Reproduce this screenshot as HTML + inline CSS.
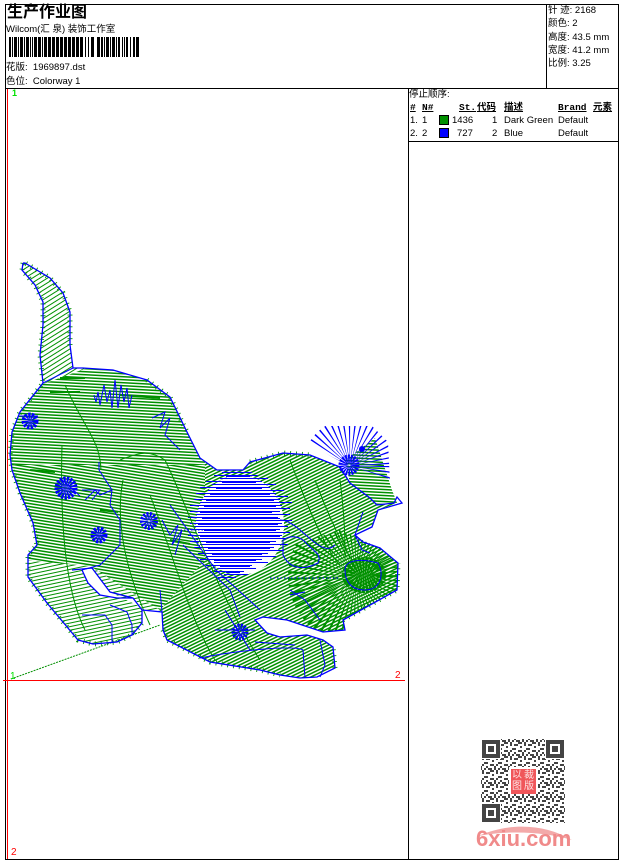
<!DOCTYPE html>
<html><head><meta charset="utf-8"><style>
html,body{margin:0;padding:0;background:#fff}
#p{position:relative;width:620px;height:860px;overflow:hidden;background:#fff;font-family:"Liberation Sans","Noto Sans CJK SC",sans-serif;font-size:9.5px;color:#000}
#p span{position:absolute;white-space:nowrap;line-height:12px}
.m{font-family:"Liberation Mono","Noto Sans CJK SC",monospace;font-weight:bold;font-size:9.5px;text-decoration:underline}
svg{position:absolute;left:0;top:0}
</style></head><body><div id="p">
<svg width="620" height="860" viewBox="0 0 620 860" shape-rendering="crispEdges">
<defs>
<pattern id="h1" width="48" height="6" patternUnits="userSpaceOnUse" patternTransform="rotate(3)"><path d="M0 .8H48M0 3.8H48" stroke="#009000" stroke-width="1.2"/></pattern>
<pattern id="h2" width="48" height="6" patternUnits="userSpaceOnUse" patternTransform="rotate(9)"><path d="M0 .8H48M0 3.8H48" stroke="#009000" stroke-width="1.2"/></pattern>
<pattern id="h3" width="48" height="7" patternUnits="userSpaceOnUse" patternTransform="rotate(-12)"><path d="M0 1H48M0 4.5H48" stroke="#009000" stroke-width="1.4"/></pattern>
<pattern id="h4" width="48" height="6" patternUnits="userSpaceOnUse" patternTransform="rotate(-26)"><path d="M0 .8H48M0 3.8H48" stroke="#009000" stroke-width="1.2"/></pattern>
<pattern id="h5" width="48" height="4" patternUnits="userSpaceOnUse" patternTransform="rotate(-32)"><path d="M0 1H48" stroke="#009000" stroke-width="1.3"/></pattern>
<pattern id="qr" width="14" height="14" patternUnits="userSpaceOnUse"><path d="M0 0h4v2h-4zM6 0h2v4h-2zM10 2h4v2h-4zM2 4h2v2h-2zM8 6h4v2h-4zM0 8h4v2h-4zM6 8h2v2h-2zM4 10h2v4h-2zM10 10h2v2h-2zM12 12h2v2h-2zM0 12h2v2h-2zM8 12h2v2h-2z" fill="#444"/></pattern>
<clipPath id="sil"><path d="M23 263L22 270L35 285L43 302L43 325L40 355L43 383L20 412L12 432L10 455L12 470L20 493L33 523L37 545L28 555L28 577L47 603L78 640L93 644L117 642L132 635L142 623L142 610L162 612L163 630L167 640L210 662L260 670L280 675L300 678L317 677L335 668L333 647L323 640L307 635L280 637L267 633L255 620L263 617L287 620L323 632L345 630L343 620L397 590L398 563L380 548L363 542L355 535L372 527L378 510L397 503L377 505L370 498L350 483L340 467L310 455L283 453L250 462L243 470L217 470L200 458L187 432L170 397L147 380L113 370L83 368L73 368L70 345L70 312L63 293L50 278L25 263Z"/></clipPath>
<clipPath id="gap"><path d="M0 0H620V860H0ZM82 570L88 583L100 595L117 598L133 598L143 608L110 592L92 568Z" clip-rule="evenodd"/></clipPath>
<clipPath id="upper"><path d="M298 438L345 464L390 482L388 442L372 426H318Z"/></clipPath>
<clipPath id="muz"><path d="M250 560L340 530L380 548L398 563L397 590L343 620L345 630L323 632L287 620L285 595Z"/></clipPath>
</defs>

<!-- stitch fills -->
<g clip-path="url(#sil)"><g clip-path="url(#gap)" shape-rendering="auto">
<path d="M0 384L43 384L90 367H205V465H0Z" fill="url(#h1)"/>
<path d="M0 465H205V560L160 610L90 566L20 560Z" fill="url(#h2)"/>
<path d="M10 555L20 560L90 566L160 610V665H20Z" fill="url(#h3)"/>
<path d="M160 610L205 560V440H410V700H160Z" fill="url(#h4)"/>
<path d="M15 255H90V367L43 384Z" fill="url(#h5)"/>
</g></g>
<path d="M345 460L375 438L392 490L397 503L377 505L350 483Z" fill="url(#h1)" shape-rendering="auto"/>
<ellipse cx="240" cy="525" rx="44" ry="50" fill="#fff"/>
<!-- blue patch horizontal stitches -->
<path id="bp" stroke="#0000ff" stroke-width="1" fill="none" d="M222 472.5H252M214 475.5H258M220 478.5H268M206 481.5H262M212 484.5H276M200 487.5H270M208 490.5H284M196 493.5H276M204 496.5H288M194 499.5H280M200 502.5H292M190 505.5H282M198 508.5H290M190 511.5H280M196 514.5H290M188 517.5H278M196 520.5H292M190 523.5H282M194 526.5H288M190 529.5H280M198 532.5H290M188 535.5H282M196 538.5H286M190 541.5H276M200 544.5H288M194 547.5H274M204 550.5H284M198 553.5H268M206 556.5H276M200 559.5H262M214 562.5H268M206 565.5H252M218 568.5H256M214 571.5H244M224 574.5H248M218 577.5H236"/>
<path stroke="#0000ff" stroke-width="1" fill="none" d="M226 476.5H250M222 482.5H256M216 488.5H262M210 494.5H270M206 500.5H274M204 506.5H276M200 512.5H272M202 518.5H280M198 524.5H278M204 530.5H276M200 536.5H280M206 542.5H270M208 548.5H270M212 554.5H262M214 560.5H256M220 566.5H250M226 572.5H240"/>
<g shape-rendering="auto" fill="none">
<!-- green fringe stubs -->
<path d="M23 263L22 270L35 285L43 302L43 325L40 355L43 383L20 412L12 432L10 455L12 470L20 493L33 523L37 545L28 555L28 577L47 603L78 640L93 644L117 642L132 635L142 623M163 630L167 640L210 662L260 670L280 675M335 668L333 647M343 620L397 590L398 563M70 345L70 312L63 293L50 278L25 263M147 380L170 397L187 432M250 462L283 453L310 455" stroke="#009000" stroke-width="5" stroke-dasharray=".9 5"/>
<!-- muzzle radial -->
<g clip-path="url(#muz)"><circle cx="356" cy="576" r="34" stroke="#009000" stroke-width="68" stroke-dasharray="1.2 2.4"/></g>
<ellipse cx="364" cy="575" rx="13" ry="9" stroke="#009000" stroke-width="18" stroke-dasharray="2 .8"/>
<!-- green interior curves -->
<g stroke="#009000" stroke-width="1">
<path d="M65 385C85 430 100 440 101 470M62 445C60 520 65 590 85 630M123 480C115 520 125 570 150 625M150 495C175 560 190 620 215 660M120 460C140 452 150 450 165 460C185 500 215 590 260 660M290 460C305 500 325 550 340 565M315 480C330 520 345 550 352 560M340 480C345 520 345 540 345 560"/>
<path d="M11 679L160 625" stroke-dasharray="2 1"/>
</g>
<g stroke="#009000" stroke-width="2"><path d="M60 378L85 378M120 395L160 398M50 392L80 392M30 470L55 472M100 510L118 512M170 540L190 544"/></g>
<!-- blue outline -->
<path d="M23 263L22 270L35 285L43 302L43 325L40 355L43 383L20 412L12 432L10 455L12 470L20 493L33 523L37 545L28 555L28 577L47 603L78 640L93 644L117 642L132 635L142 623L142 610L133 598L117 598L100 595L88 583L82 570M72 570L92 568L110 592L133 598M142 610L162 612L163 630L167 640L210 662L260 670L280 675L300 678L317 677L335 668L333 647L323 640L307 635L280 637L267 633L255 620L263 617L287 620L323 632L345 630L343 620L397 590L398 563L380 548L363 542L355 535L372 527L378 510L402 503L397 497L394 503L377 505L370 498L350 483L340 467L310 455L283 453L250 462L243 470L217 470L200 458L187 432L170 397L147 380L113 370L83 368L73 368L70 345L70 312L63 293L50 278L25 263L23 263" stroke="#0000ff" stroke-width="1.3"/>
<g stroke="#0000ff" stroke-width="1">
<path d="M43 383L73 368M160 590L162 612M99 462L99 470L112 490L110 505L120 520L120 545L100 565L82 570M112 490L100 495L95 490L85 500M110 605L127 612L132 625V635M82 615L105 615L112 625L112 642"/>
<path d="M170 505L216 570L260 610M183 545L230 590L240 617M280 520C300 520 320 560 335 545M283 540C290 535 300 535 308 545C315 552 322 555 318 563C305 570 290 570 283 555ZM290 590L305 600L320 620M355 535L362 550L370 553M345 570C345 560 360 558 378 563C385 575 380 590 365 590C350 590 345 580 345 570ZM290 595L305 592M355 535L363 512"/>
<path d="M177 530H225M270 578H340" stroke-dasharray="1.5 2"/>
<path d="M200 658C240 650 295 645 303 650L305 678M255 642L295 645M320 640L325 665L320 677"/>
<path d="M94 395L96 402L98 392L100 405L104 385L107 402L110 390L112 408L115 380L118 408L121 385L124 402L127 388L129 408L132 395"/>
<path d="M152 418L165 412L160 428L170 418L165 435L180 450"/>
<path d="M162 520L170 535L178 525L172 545L182 530L175 555"/>
</g>
<g stroke="#0000ff" stroke-width="1">
<circle cx="30" cy="421" r="4" stroke-width="9" stroke-dasharray="1.5 .7"/>
<circle cx="66" cy="488" r="6" stroke-width="11" stroke-dasharray="1.5 .7"/>
<circle cx="99" cy="535" r="4" stroke-width="9" stroke-dasharray="1.5 .7"/>
<circle cx="149" cy="521" r="5" stroke-width="8" stroke-dasharray="1.5 .9"/>
<circle cx="240" cy="632" r="5" stroke-width="7" stroke-dasharray="1.5 .9"/>
</g>
<path d="M20 416H38M60 478L80 496M82 490H100L92 500M225 610L250 650M215 630H255" stroke="#0000ff" stroke-width="1"/>
<!-- ear spikes -->
<g clip-path="url(#upper)"><circle cx="350" cy="466" r="24" stroke="#0000ff" stroke-width="46" stroke-dasharray=".8 2.5"/></g>
<circle cx="349" cy="465" r="6" stroke="#0000ff" stroke-width="9" stroke-dasharray="1.4 .7"/>
<circle cx="362" cy="449" r="3" fill="#0000ff"/>
</g>

<!-- frame -->
<g fill="#000">
<rect x="5" y="4" width="614" height="1"/><rect x="5" y="88" width="614" height="1"/>
<rect x="5" y="4" width="1" height="856"/><rect x="618" y="4" width="1" height="856"/>
<rect x="5" y="859" width="614" height="1"/><rect x="546" y="4" width="1" height="84"/>
<rect x="408" y="88" width="1" height="772"/><rect x="409" y="141" width="210" height="1"/>
</g>
<rect x="7" y="89" width="1" height="770" fill="#f00"/><rect x="3" y="680" width="402" height="1" fill="#f00"/>

<!-- barcode -->
<path fill="#000" d="M9 37h2v20H9zM12 37h1v20h-1zM14 37h3v20h-3zM18 37h1v20h-1zM20 37h3v20h-3zM24 37h1v20h-1zM26 37h3v20h-3zM30 37h1v20h-1zM32 37h1v20h-1zM34 37h3v20h-3zM38 37h3v20h-3zM42 37h1v20h-1zM44 37h3v20h-3zM48 37h3v20h-3zM52 37h3v20h-3zM56 37h3v20h-3zM60 37h3v20h-3zM64 37h3v20h-3zM68 37h3v20h-3zM72 37h3v20h-3zM76 37h3v20h-3zM80 37h3v20h-3zM85 37h1v20h-1zM88 37h1v20h-1zM91 37h3v20h-3zM97 37h3v20h-3zM101 37h2v20h-2zM104 37h1v20h-1zM106 37h3v20h-3zM110 37h1v20h-1zM112 37h3v20h-3zM116 37h1v20h-1zM118 37h2v20h-2zM122 37h1v20h-1zM124 37h1v20h-1zM126 37h2v20h-2zM130 37h1v20h-1zM133 37h2v20h-2zM136 37h3v20h-3z"/>

<!-- swatches -->
<rect x="439.5" y="115.5" width="9" height="9" fill="#009000" stroke="#000"/>
<rect x="439.5" y="128.5" width="9" height="9" fill="#0000ff" stroke="#000"/>

<!-- QR -->
<g shape-rendering="auto">
<rect x="481" y="739" width="84" height="84" fill="url(#qr)"/>
<path d="M481 739h20v20h-20zM545 739h20v20h-20zM481 803h20v20h-20z" fill="#fff"/>
<path d="M482 740h18v18h-18zM486 744v10h10v-10zM546 740h18v18h-18zM550 744v10h10v-10zM482 804h18v18h-18zM486 808v10h10v-10z" fill="#444" fill-rule="evenodd"/>
<path d="M488 746h6v6h-6zM552 746h6v6h-6zM488 810h6v6h-6z" fill="#444"/>
<rect x="509" y="767" width="29" height="27" fill="#fff"/>
<rect x="511" y="769" width="25" height="25" fill="#f0565a"/>
</g>
<path d="M478 836C510 822 545 824 572 840C545 832 510 830 478 836Z" fill="#f3a9a9" shape-rendering="auto"/>
</svg>

<span style="left:7px;top:4px;font-size:16px;line-height:18px;font-weight:bold">生产作业图</span>
<span style="left:6px;top:24px">Wilcom(汇 泉) 装饰工作室</span>
<span style="left:6px;top:62px">花版:&nbsp; 1969897.dst</span>
<span style="left:6px;top:76px">色位:&nbsp; Colorway 1</span>
<span style="left:12px;top:87px;color:#00e000;font-weight:bold;font-size:9px">1</span>
<span style="left:10px;top:671px;color:#00e000;font-size:10px">1</span>
<span style="left:395px;top:670px;color:#f00;font-size:10px">2</span>
<span style="left:11px;top:847px;color:#f00;font-size:10px">2</span>

<span style="left:548px;top:5px">针 迹:&nbsp;2168</span>
<span style="left:548px;top:18px">颜色:&nbsp;2</span>
<span style="left:548px;top:32px">高度:&nbsp;43.5 mm</span>
<span style="left:548px;top:45px">宽度:&nbsp;41.2 mm</span>
<span style="left:548px;top:58px">比例:&nbsp;3.25</span>

<span style="left:409px;top:89px">停止顺序:</span>
<span class="m" style="left:410px;top:102px">#</span>
<span class="m" style="left:422px;top:102px">N#</span>
<span class="m" style="left:459px;top:102px">St.</span>
<span class="m" style="left:477px;top:102px">代码</span>
<span class="m" style="left:504px;top:102px">描述</span>
<span class="m" style="left:558px;top:102px">Brand</span>
<span class="m" style="left:593px;top:102px">元素</span>

<span style="left:410px;top:115px">1.</span><span style="left:422px;top:115px">1</span><span style="left:452px;top:115px">1436</span><span style="left:492px;top:115px">1</span><span style="left:504px;top:115px">Dark Green</span><span style="left:558px;top:115px">Default</span>
<span style="left:410px;top:128px">2.</span><span style="left:422px;top:128px">2</span><span style="left:457px;top:128px">727</span><span style="left:492px;top:128px">2</span><span style="left:504px;top:128px">Blue</span><span style="left:558px;top:128px">Default</span>

<span style="left:512px;top:770px;width:24px;font-size:10px;line-height:11px;color:#fde3e3;white-space:normal;letter-spacing:2px">以裁图版</span>
<span style="left:476px;top:826px;font-size:22px;line-height:26px;font-weight:bold;color:#f08a8a">6xiu.com</span>
</div></body></html>
